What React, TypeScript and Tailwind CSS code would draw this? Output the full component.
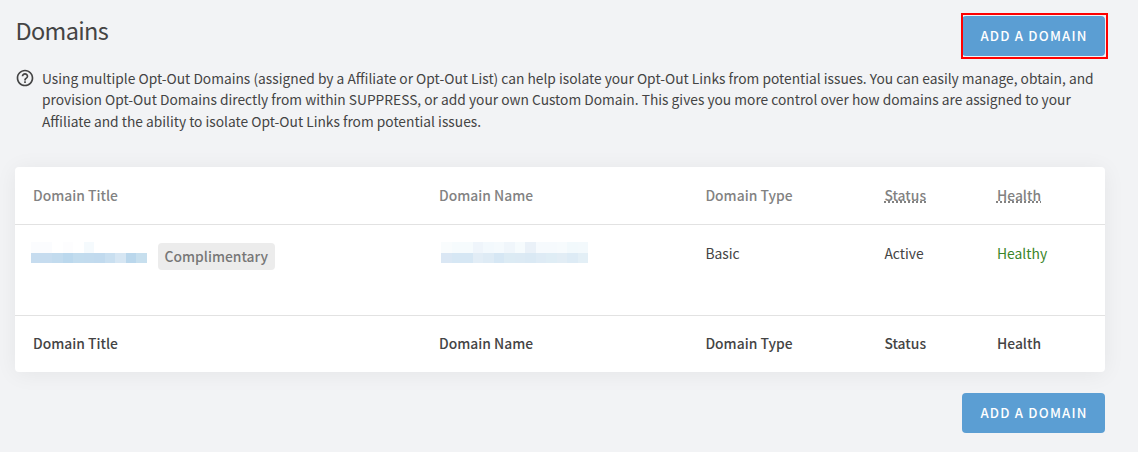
import { MdHelpOutline } from "react-icons/md";

const columns = [
  { name: "Domain Title", width: "w-[406px]", hint: false },
  { name: "Domain Name", width: "w-[266.4px]", hint: false },
  { name: "Domain Type", width: "w-[179px]", hint: false },
  { name: "Status", width: "w-[112.6px]", hint: true },
  { name: "Health", width: "w-[126px]", hint: true },
];

const titleMask = {
  top: ["#fbfcfe", "#fbfcfe", "#ffffff", "#fdfdfe", "#ffffff", "#f5fafd", "#ffffff", "#ffffff", "#ffffff", "#ffffff", "#ffffff"],
  bottom: ["#c6dcef", "#c6dcef", "#c2dbee", "#bbd8ed", "#c2dcee", "#c2dbee", "#c1daee", "#c9dff0", "#d6e6f3", "#bad7ec", "#c7dfee"],
};

const nameMask = {
  top: ["#f9fcfd", "#f6fbfd", "#f6fbfd", "#eff5fb", "#f3f9fd", "#f5fafd", "#f0f6fb", "#f6fbfd", "#eaf1f8", "#f6fafd", "#f6fafd", "#f7fbfd", "#f2f9fc", "#f3f9fc"],
  bottom: ["#dae7f4", "#d6e7f4", "#d6e7f4", "#e2edf6", "#deebf5", "#d6e7f4", "#dcebf4", "#dceaf4", "#dae9f4", "#deebf5", "#dfedf5", "#e2edf5", "#ddebf5", "#e3eff6"],
};

const Mask = ({ top, bottom }: { top: string[]; bottom: string[] }) => (
  <div className="w-fit">
    {[top, bottom].map((row, i) => (
      <div key={i} className="flex">
        {row.map((color, j) => (
          <span key={j} className="h-[10.5px] w-[10.5px]" style={{ backgroundColor: color }} />
        ))}
      </div>
    ))}
  </div>
);

const AddButton = () => (
  <button className="block h-10 w-[143px] rounded-[4px] bg-[#5b9ed3] pb-px pl-px text-center text-[13.2px] leading-[38px] font-medium tracking-[1.2px] text-white">
    ADD A DOMAIN
  </button>
);

export default function App() {
  return (
    <main className="h-[452px] w-[1138px] overflow-hidden bg-[#f2f3f5] pt-4 pr-[33px] pl-[15px] font-['Noto_Sans_CJK_SC','Open_Sans',sans-serif] text-[13.87px] text-[#444444]">
      <header className="flex h-10 items-start justify-between">
        <h1 className="pl-[0.5px] text-[23.5px] leading-7 tracking-[-0.65px]">Domains</h1>
        <div className="relative">
          <AddButton />
          <span className="pointer-events-none absolute -top-[3px] -right-[3px] -bottom-[3px] -left-px border-2 border-[#ff0000]" />
        </div>
      </header>

      {/* Help text */}
      <section className="mt-3 flex h-[65px] items-start">
        <MdHelpOutline className="-mt-[0.5px] h-5 w-5 shrink-0 text-[#444444]" />
        <p className="ml-[7px] text-[13.785px] leading-[21.4px] whitespace-nowrap">
          Using multiple Opt-Out Domains (assigned by a Affiliate or Opt-Out List) can help isolate your Opt-Out Links from potential issues. You can easily manage, obtain, and
          <br />
          provision Opt-Out Domains directly from within SUPPRESS, or add your own Custom Domain. This gives you more control over how domains are assigned to your
          <br />
          Affiliate and the ability to isolate Opt-Out Links from potential issues.
        </p>
      </section>

      {/* Domains table */}
      <div className="mt-[34px] h-[205px] rounded-[4px] bg-white shadow-[0_2px_22px_rgba(0,0,0,0.06)]">
        <table className="w-full table-fixed border-separate border-spacing-0 text-left">
          <thead>
            <tr className="text-[#828282]">
              {columns.map((col) => (
                <th key={col.name} className={`${col.width} h-[58px] border-b border-[#e2e2e2] px-[18px] py-0 font-medium`}>
                  {col.hint ? (
                    <abbr className="underline decoration-dotted decoration-2 underline-offset-0">{col.name}</abbr>
                  ) : (
                    col.name
                  )}
                </th>
              ))}
            </tr>
          </thead>
          <tbody>
            <tr className="align-top">
              <td className="h-[90px] px-4 pt-[17px] pb-0">
                <div className="flex items-start">
                  <Mask {...titleMask} />
                  <span className="ml-[11.5px] mt-px h-[27px] rounded-[4px] bg-[#ececec] px-[6.5px] leading-[27px] font-medium text-[#777777]">
                    Complimentary
                  </span>
                </div>
              </td>
              <td className="h-[90px] px-[20px] pt-[17px] pb-0">
                <Mask {...nameMask} />
              </td>
              <td className="h-[90px] px-[18px] pt-[18px] pb-0 leading-5">Basic</td>
              <td className="h-[90px] px-[18px] pt-[18px] pb-0 leading-5">Active</td>
              <td className="h-[90px] px-[18px] pt-[18px] pb-0 leading-5 text-[#3a8528]">Healthy</td>
            </tr>
          </tbody>
          <tfoot>
            <tr>
              {columns.map((col) => (
                <th key={col.name} className="h-[57px] border-t border-[#e2e2e2] px-[18px] pt-0 pb-[2px] font-medium">
                  {col.name}
                </th>
              ))}
            </tr>
          </tfoot>
        </table>
      </div>

      <footer className="mt-[21px] flex justify-end">
        <AddButton />
      </footer>
    </main>
  );
}
